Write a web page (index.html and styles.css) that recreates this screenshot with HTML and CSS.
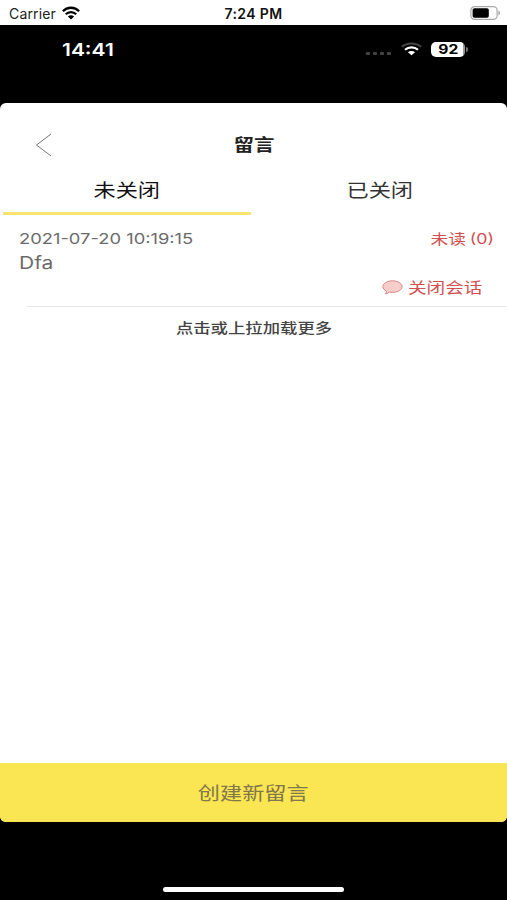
FILE: index.html
```html
<!DOCTYPE html>
<html lang="zh-CN">
<head>
  <meta charset="UTF-8">
  <meta name="viewport" content="width=device-width, initial-scale=1">
  <title>留言</title>
  <link rel="stylesheet" href="styles.css">
</head>
<body>

<div class="status-bar">
  <div class="carrier">
    <span>Carrier</span>
    <svg width="18" height="14" viewBox="0 0 18 14" fill="none" stroke="#000" stroke-width="2.3">
      <path d="M0.9 5.2C5.4 0.6 12.6 0.6 17.1 5.2"/>
      <path d="M3.8 8.2C6.7 5.3 11.3 5.3 14.2 8.2"/>
      <path d="M9 13.5L5.9 10.4C7.6 8.8 10.4 8.8 12.1 10.4Z" fill="#000" stroke="none"/>
    </svg>
  </div>
  <div class="clock">7:24 PM</div>
  <svg class="battery" width="31" height="14" viewBox="0 0 31 14">
    <rect x="0.9" y="0.7" width="26.2" height="12.6" rx="3.6" fill="#fff" stroke="#aaa" stroke-width="1.2"/>
    <rect x="2.6" y="2.3" width="16.2" height="9.4" rx="1.8" fill="#000"/>
    <path d="M28.4 4.6C30.6 5.4 30.6 8.6 28.4 9.4Z" fill="#aaa"/>
  </svg>
</div>

<div class="screen">
  <div class="phone-bar">
    <span class="phone-time wide">14:41</span>
    <div class="phone-icons">
      <div class="dots"><i></i><i></i><i></i><i></i></div>
      <svg width="21" height="14" viewBox="0 0 21 14" fill="none">
        <path d="M0.8 4.8C6 0.4 15 0.4 20.2 4.8" stroke="#484848" stroke-width="1.8"/>
        <path d="M4 7.8C7.6 4.6 13.4 4.6 17 7.8" stroke="#fff" stroke-width="2.2"/>
        <path d="M10.5 13.2L6.9 10.2C8.9 8.6 12.1 8.6 14.1 10.2Z" fill="#fff"/>
      </svg>
      <div class="level"><span>92</span></div>
    </div>
  </div>

  <div class="sheet">
    <div class="nav">
      <svg class="back" width="18" height="24" viewBox="0 0 18 24" fill="none" stroke="#777" stroke-width="1">
        <path d="M16 1L1.5 12L16 23"/>
      </svg>
      <h1 class="wide">留言</h1>
    </div>

    <div class="tabs">
      <div class="tab active"><span class="wide">未关闭</span></div>
      <div class="tab"><span class="wide">已关闭</span></div>
    </div>

    <div class="message">
      <div class="row">
        <span class="date wide">2021-07-20 10:19:15</span>
        <span class="unread wide">未读 (0)</span>
      </div>
      <div class="name wide">Dfa</div>
      <div class="close-chat">
        <svg width="21" height="15" viewBox="0 0 21 15" fill="#f6cdcb" stroke="#dc8583" stroke-width="1">
          <path d="M10.5 0.8C15.8 0.8 20.1 3.4 20.1 6.6C20.1 9.9 15.8 12.4 10.5 12.4C9.4 12.4 8.4 12.3 7.4 12.1C6.4 13 5 13.7 3.4 13.9C4.2 13.1 4.6 12.2 4.5 11.2C2.3 10.2 0.9 8.5 0.9 6.6C0.9 3.4 5.2 0.8 10.5 0.8Z"/>
        </svg>
        <span class="wide">关闭会话</span>
      </div>
    </div>

    <div class="more"><span class="wide">点击或上拉加载更多</span></div>

    <div class="create"><span class="wide">创建新留言</span></div>
  </div>

  <div class="home-line"></div>
</div>

</body>
</html>
```
FILE: styles.css
```css
* { box-sizing: border-box; }
body {
  margin: 0;
  height: 900px;
  display: flex;
  flex-direction: column;
  overflow: hidden;
  background: #fff;
  font-family: Inter, "Noto Sans CJK SC", sans-serif;
}
svg { display: block; flex: none; }

/* the phone view is stretched sideways */
.wide {
  display: inline-block;
  white-space: nowrap;
  transform: scaleX(1.2);
}

.status-bar {
  height: 25px;
  flex: none;
  display: grid;
  grid-template-columns: 1fr auto 1fr;
  align-items: center;
  padding: 2px 6px 0 9px;
  font-size: 14px;
  line-height: 22px;
  color: #222;
}
.carrier { display: flex; align-items: center; gap: 6px; letter-spacing: 0.15px; }
.clock { font-weight: 600; letter-spacing: 0.4px; color: #111; margin-right: 3px; }
.battery { justify-self: end; margin-top: -1px; }
.carrier svg { margin-top: -2px; }

.screen {
  flex: 1;
  display: flex;
  flex-direction: column;
  background: #000;
}
.phone-bar {
  height: 78px;
  flex: none;
  display: flex;
  justify-content: space-between;
  align-items: flex-start;
  padding: 14px 42px 0 62px;
  color: #fff;
}
.phone-time {
  font-size: 17.5px;
  font-weight: 600;
  line-height: 21px;
  transform-origin: left;
}
.phone-icons { display: flex; align-items: center; height: 20px; }
.dots { display: flex; gap: 3px; margin: 9px 10px 0 0; }
.dots i { width: 4px; height: 3px; border-radius: 1px; background: #444; }
.level {
  position: relative;
  width: 34px;
  height: 15px;
  margin-left: 9px;
  border-radius: 5px;
  background: linear-gradient(to right, #fff 32px, #999 32px);
  color: #000;
  font-size: 13px;
  font-weight: 700;
  line-height: 15px;
  text-align: center;
}
.level span { display: inline-block; transform: scaleX(1.2); }
.level::after {
  content: "";
  position: absolute;
  right: -3px;
  top: 5px;
  width: 2px;
  height: 5px;
  border-radius: 0 2px 2px 0;
  background: #777;
}

.sheet {
  height: 719px;
  flex: none;
  display: flex;
  flex-direction: column;
  overflow: hidden;
  border-radius: 6px;
  background: #fff;
}
.nav {
  height: 68px;
  display: grid;
  grid-template-columns: 1fr auto 1fr;
  align-items: center;
  padding: 15px 35px 0;
}
.nav h1 {
  margin: 0;
  font-size: 17px;
  font-weight: 600;
  line-height: 26px;
  color: #222;
}
.tabs { display: flex; gap: 5px; height: 44px; padding-left: 3px; }
.tab {
  flex: none;
  width: 248px;
  padding-top: 5px;
  text-align: center;
  font-size: 18.5px;
  line-height: 28px;
  color: #333;
}
.tab.active { border-bottom: 3px solid #f5e473; color: #111; }

.message {
  height: 92px;
  padding: 13px 13px 0 19px;
  color: #6b6b6b;
  background: linear-gradient(#e9e9e9, #e9e9e9) 27px 100% / 100% 1px no-repeat;
}
.row { display: flex; justify-content: space-between; line-height: 22px; }
.date { font-size: 14.5px; transform-origin: left; transform: scaleX(1.265); }
.unread {
  font-size: 14px;
  color: #d1504f;
  word-spacing: -1px;
  transform: scaleX(1.27);
  transform-origin: right;
}
.name {
  display: block;
  font-size: 17.5px;
  line-height: 26px;
  transform-origin: left;
}
.close-chat {
  display: flex;
  align-items: center;
  height: 22px;
  padding-left: 363px;
  font-size: 15px;
  line-height: 22px;
  color: #d1504f;
}
.close-chat .wide { margin: 1px 0 0 5px; transform-origin: left; transform: scaleX(1.24); }

.more {
  padding-top: 9px;
  text-align: center;
  font-size: 14px;
  font-weight: 500;
  line-height: 24px;
  color: #444;
}
.more .wide { transform: scaleX(1.24); }

.create {
  height: 59px;
  margin-top: auto;
  padding-top: 1px;
  background: #fae552;
  color: #81774a;
  text-align: center;
  font-size: 18.5px;
  line-height: 59px;
}
.home-line {
  width: 181px;
  height: 5px;
  margin: auto auto 8px 163px;
  border-radius: 3px;
  background: #fff;
}
```
